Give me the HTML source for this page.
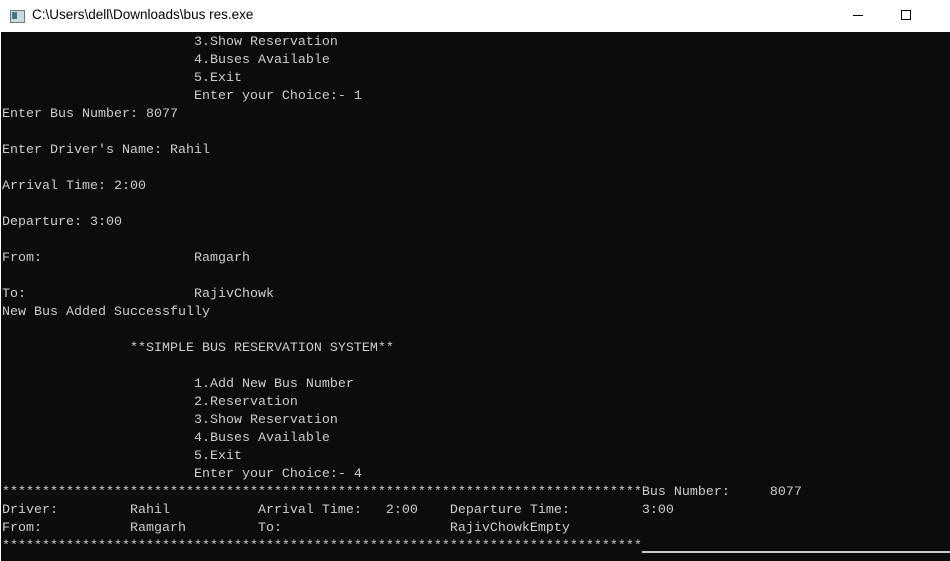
<!DOCTYPE html>
<html><head><meta charset="utf-8"><style>
html,body{margin:0;padding:0;width:950px;height:561px;overflow:hidden;background:#fff}
.tb{position:absolute;left:0;top:0;width:950px;height:32px;background:#fff}
.tb .t{position:absolute;left:32px;top:7px;font:13.5px "Liberation Sans",sans-serif;color:#000}
.ic{position:absolute;left:10px;top:10px;width:13px;height:11px;border:1px solid #6a7a80;background:#cfd8dc}
.ic:before{content:"";position:absolute;left:1px;top:1px;width:5px;height:7px;background:#3a7a8a}
.min{position:absolute;left:853px;top:15px;width:10px;height:1px;background:#000}
.max{position:absolute;left:901px;top:10px;width:8px;height:8px;border:1px solid #000}
.con{position:absolute;left:1px;top:32px;width:949px;height:529px;background:#0c0c0c}
pre{position:absolute;left:1px;top:2px;margin:0;font-family:"Liberation Mono",monospace;font-size:13.33px;line-height:18px;color:#cccccc;white-space:pre}
.cur{position:absolute;left:641px;top:519px;width:309px;height:2px;background:#cccccc}
</style></head><body>
<div class="tb"><div class="ic"></div><div class="t">C:\Users\dell\Downloads\bus res.exe</div><div class="min"></div><div class="max"></div></div>
<div class="con"><pre>                        3.Show Reservation
                        4.Buses Available
                        5.Exit
                        Enter your Choice:- 1
Enter Bus Number: 8077

Enter Driver's Name: Rahil

Arrival Time: 2:00

Departure: 3:00

From:                   Ramgarh

To:                     RajivChowk
New Bus Added Successfully

                **SIMPLE BUS RESERVATION SYSTEM**

                        1.Add New Bus Number
                        2.Reservation
                        3.Show Reservation
                        4.Buses Available
                        5.Exit
                        Enter your Choice:- 4
********************************************************************************Bus Number:     8077
Driver:         Rahil           Arrival Time:   2:00    Departure Time:         3:00
From:           Ramgarh         To:                     RajivChowkEmpty
********************************************************************************</pre><div class="cur"></div></div>
</body></html>
